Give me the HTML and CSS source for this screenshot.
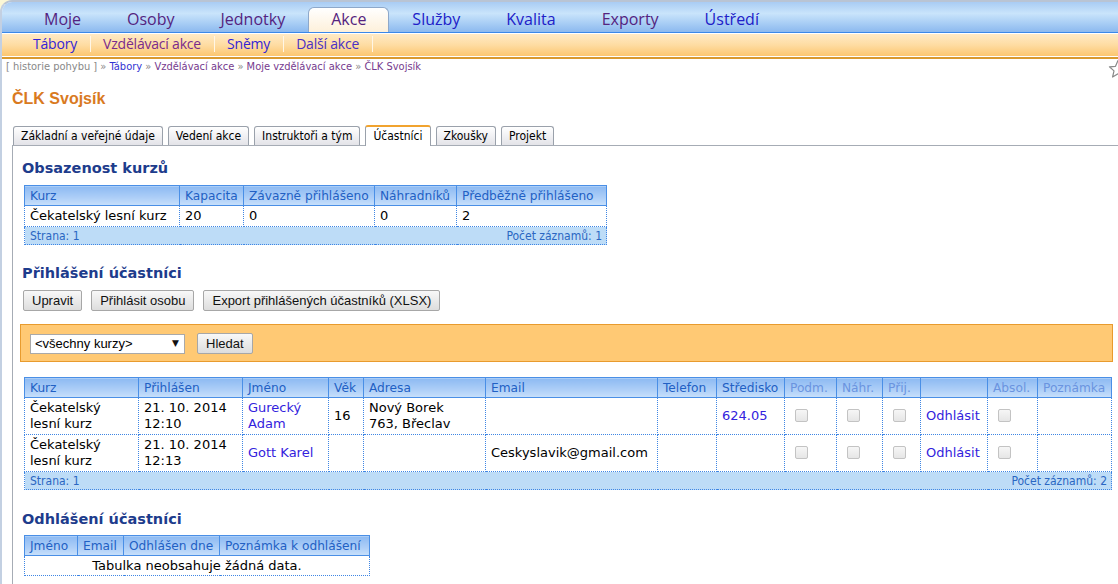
FILE: index.html
```html
<!DOCTYPE html>
<html lang="cs">
<head>
<meta charset="utf-8">
<title>ČLK Svojsík</title>
<link rel="stylesheet" href="styles.css">
</head>
<body>
<div class="page">
  <nav class="topnav">
    <a class="nav-item visited">Moje</a>
    <a class="nav-item visited">Osoby</a>
    <a class="nav-item visited">Jednotky</a>
    <a class="nav-item visited active">Akce</a>
    <a class="nav-item">Služby</a>
    <a class="nav-item">Kvalita</a>
    <a class="nav-item visited">Exporty</a>
    <a class="nav-item">Ústředí</a>
  </nav>
  <nav class="subnav">
    <a class="sub-item">Tábory</a>
    <a class="sub-item visited">Vzdělávací akce</a>
    <a class="sub-item">Sněmy</a>
    <a class="sub-item mixed">Další akce</a>
  </nav>
  <div class="subnav-line"></div>

  <div class="crumbs">
    <span class="hist">[ historie pohybu ]</span> <span class="sep">»</span>
    <a class="crumb">Tábory</a> <span class="sep">»</span>
    <a class="crumb visited">Vzdělávací akce</a> <span class="sep">»</span>
    <a class="crumb visited">Moje vzdělávací akce</a> <span class="sep">»</span>
    <a class="crumb visited">ČLK Svojsík</a>
  </div>

  <h1 class="title">ČLK Svojsík</h1>

  <div class="tabs">
    <span class="tab">Základní a veřejné údaje</span>
    <span class="tab">Vedení akce</span>
    <span class="tab">Instruktoři a tým</span>
    <span class="tab current">Účastníci</span>
    <span class="tab">Zkoušky</span>
    <span class="tab">Projekt</span>
  </div>

  <div class="panel">
    <h2 class="section first">Obsazenost kurzů</h2>
    <table class="grid t1">
      <colgroup><col><col><col><col><col></colgroup>
      <thead>
        <tr><th>Kurz</th><th>Kapacita</th><th>Závazně přihlášeno</th><th>Náhradníků</th><th>Předběžně přihlášeno</th></tr>
      </thead>
      <tbody>
        <tr><td>Čekatelský lesní kurz</td><td>20</td><td>0</td><td>0</td><td>2</td></tr>
      </tbody>
      <tfoot>
        <tr><td colspan="5"><div class="foot"><span>Strana: 1</span><span>Počet záznamů: 1</span></div></td></tr>
      </tfoot>
    </table>

    <h2 class="section">Přihlášení účastníci</h2>
    <div class="buttons">
      <button class="btn">Upravit</button>
      <button class="btn">Přihlásit osobu</button>
      <button class="btn">Export přihlášených účastníků (XLSX)</button>
    </div>

    <div class="filter">
      <span class="select-wrap">
        <select class="sel"><option>&lt;všechny kurzy&gt;</option></select>
        <span class="arrow">▼</span>
      </span>
      <button class="btn search">Hledat</button>
    </div>

    <table class="grid t2">
      <colgroup><col><col><col><col><col><col><col><col><col><col><col><col><col><col></colgroup>
      <thead>
        <tr>
          <th>Kurz</th><th>Přihlášen</th><th>Jméno</th><th>Věk</th><th>Adresa</th><th>Email</th><th>Telefon</th><th>Středisko</th>
          <th class="light">Podm.</th><th class="light">Náhr.</th><th class="light">Přij.</th><th></th><th class="light">Absol.</th><th class="light">Poznámka</th>
        </tr>
      </thead>
      <tbody>
        <tr>
          <td>Čekatelský lesní kurz</td>
          <td>21. 10. 2014 12:10</td>
          <td><a class="link">Gurecký Adam</a></td>
          <td>16</td>
          <td>Nový Borek<br>763, Břeclav</td>
          <td></td>
          <td></td>
          <td><a class="link">624.05</a></td>
          <td><span class="cb"></span></td>
          <td><span class="cb"></span></td>
          <td><span class="cb"></span></td>
          <td><a class="link">Odhlásit</a></td>
          <td><span class="cb"></span></td>
          <td></td>
        </tr>
        <tr>
          <td>Čekatelský lesní kurz</td>
          <td>21. 10. 2014 12:13</td>
          <td><a class="link">Gott Karel</a></td>
          <td></td>
          <td></td>
          <td>Ceskyslavik@gmail.com</td>
          <td></td>
          <td></td>
          <td><span class="cb"></span></td>
          <td><span class="cb"></span></td>
          <td><span class="cb"></span></td>
          <td><a class="link">Odhlásit</a></td>
          <td><span class="cb"></span></td>
          <td></td>
        </tr>
      </tbody>
      <tfoot>
        <tr><td colspan="14"><div class="foot"><span>Strana: 1</span><span>Počet záznamů: 2</span></div></td></tr>
      </tfoot>
    </table>

    <h2 class="section last">Odhlášení účastníci</h2>
    <table class="grid t3">
      <colgroup><col><col><col><col></colgroup>
      <thead>
        <tr><th>Jméno</th><th>Email</th><th>Odhlášen dne</th><th>Poznámka k odhlášení</th></tr>
      </thead>
      <tbody>
        <tr><td colspan="4" class="empty">Tabulka neobsahuje žádná data.</td></tr>
      </tbody>
    </table>
  </div>

  <svg class="star" width="20" height="20" viewBox="0 0 20 20" aria-hidden="true">
    <polygon points="10,1.5 12.5,7.3 18.6,7.8 14,11.9 15.4,18 10,14.8 4.6,18 6,11.9 1.4,7.8 7.5,7.3" fill="#fff" stroke="#8a8a8a" stroke-width="1.2" stroke-linejoin="round"/>
  </svg>
</div>
</body>
</html>
```

FILE: styles.css
```css
html, body {
  margin: 0;
  padding: 0;
}
body {
  background: #fbf7d6;
  font-family: "DejaVu Sans", Verdana, sans-serif;
  font-size: 13px;
  color: #000;
}
a { text-decoration: none; cursor: pointer; }

.page {
  position: relative;
  background: #fff;
  border-top: 2px solid #b9c4d4;
  border-left: 2px solid #c3d0e2;
  border-top-left-radius: 12px;
  min-height: 582px;
  overflow: hidden;
}

/* ---------- top navigation ---------- */
.topnav {
  display: flex;
  align-items: flex-end;
  height: 30px;
  padding-left: 19px;
  background: linear-gradient(#a9ccf4 0%, #c9e4fb 38%, #a9cef5 70%, #8cb9ef 100%);
  border-bottom: 1px solid #3b88e8;
}
.nav-item {
  display: block;
  height: 24px;
  line-height: 23px;
  padding: 0 22px;
  border: 1px solid transparent;
  border-bottom: none;
  font-family: "Open Sans", "DejaVu Sans", sans-serif;
  font-size: 16px;
  color: #2020c8;
}
.nav-item.visited { color: #54237f; }
.nav-item.active {
  background: linear-gradient(#ffffff, #fdf0da);
  border-color: #8ea8ca;
  border-radius: 6px 6px 0 0;
}

.subnav {
  box-sizing: border-box;
  display: flex;
  align-items: center;
  margin-top: 1px;
  height: 22px;
  padding: 0 0 3px 18px;
  background: linear-gradient(#ffeac6 0%, #fedca2 50%, #fcc670 100%);
}
.sub-item {
  position: relative;
  padding: 0 13px;
  font-family: "Open Sans", "DejaVu Sans", sans-serif;
  font-size: 14px;
  line-height: 19px;
  letter-spacing: -0.2px;
  color: #3324d6;
}
.sub-item::after {
  content: "";
  position: absolute;
  right: -1px;
  top: 2px;
  width: 1px;
  height: 16px;
  background: #fff6e6;
}
.sub-item.visited { color: #7a2b8c; }
.sub-item.mixed { color: #4a30c4; }
.subnav-line {
  margin-top: 1px;
  height: 2px;
  background: #d9992f;
}

/* ---------- breadcrumb ---------- */
.crumbs {
  margin-top: 1px;
  padding-left: 4px;
  font-family: "DejaVu Sans Condensed", "DejaVu Sans", sans-serif;
  font-size: 11px;
  line-height: 14px;
  color: #888;
}
.crumbs .sep { color: #888; }
.crumb { color: #3232d2; }
.crumb.visited { color: #763a8e; }

.title {
  margin: 16px 0 0 10px;
  font-family: "Liberation Sans", Arial, sans-serif;
  font-weight: bold;
  font-size: 16px;
  line-height: 18px;
  color: #d97a1f;
}

/* ---------- tabs ---------- */
.tabs {
  display: flex;
  gap: 5px;
  margin: 18px 0 0 11px;
  position: relative;
  z-index: 1;
}
.tab {
  display: block;
  height: 18px;
  line-height: 18px;
  padding: 0 7px;
  border: 1px solid #9aa1ab;
  border-bottom: none;
  border-radius: 3px 3px 0 0;
  background: linear-gradient(#ffffff, #e3e3e8);
  font-family: "DejaVu Sans Condensed", "DejaVu Sans", sans-serif;
  font-size: 12px;
  color: #000;
}
.tab.current {
  height: 19px;
  line-height: 18px;
  margin-bottom: -1px;
  border-top: 2px solid #f1a32f;
  background: #fff;
  margin-top: -1px;
}

/* ---------- panel ---------- */
.panel {
  margin-left: 10px;
  border-top: 1px solid #a6acb5;
  border-left: 1px solid #a6acb5;
  padding: 0 0 20px 9px;
}
.section {
  margin: 19px 0 8px 0;
  font-family: "DejaVu Sans", Verdana, sans-serif;
  font-weight: bold;
  font-size: 14.5px;
  line-height: 18px;
  color: #1d3c8c;
}
.section.first { margin-top: 13px; }
.section.last { margin-top: 20px; margin-bottom: 7px; }

/* ---------- grids ---------- */
.grid {
  border-collapse: collapse;
  table-layout: fixed;
  margin-left: 2px;
}
.grid th {
  padding: 2px 4px 1px 5px;
  border: 1px solid #4a8fe6;
  background: linear-gradient(#8dbaf2 0%, #abcdf7 55%, #c8e0fb 100%);
  font-weight: normal;
  font-size: 12.2px;
  text-align: left;
  line-height: 16px;
  color: #2160c4;
  white-space: nowrap;
  overflow: hidden;
}
.grid th.light { color: #6a94e0; }
.grid td {
  padding: 2px 5px;
  border: 1px dotted #3f86e4;
  line-height: 16px;
  vertical-align: middle;
}
.grid tfoot td {
  background: #bddcf7;
  padding: 2px 4px 1px 5px;
  font-family: "DejaVu Sans Condensed", "DejaVu Sans", sans-serif;
  font-size: 12px;
  line-height: 14px;
  color: #2a66c2;
}
.foot {
  display: flex;
  justify-content: space-between;
}
.link { color: #3322dd; }

.cb {
  display: inline-block;
  width: 11px;
  height: 11px;
  margin-left: 5px;
  border: 1px solid #c3c3c3;
  border-radius: 2px;
  background: linear-gradient(#f6f6f6, #e6e6e6);
  vertical-align: middle;
  position: relative;
  top: -1px;
}

.t1 { width: 582px; }
.t1 col:nth-child(1) { width: 155px; }
.t1 col:nth-child(2) { width: 64px; }
.t1 col:nth-child(3) { width: 131px; }
.t1 col:nth-child(4) { width: 82px; }
.t1 col:nth-child(5) { width: 150px; }

.t2 { width: 1087px; margin-top: 15px; }
.t2 col:nth-child(1) { width: 114px; }
.t2 col:nth-child(2) { width: 104px; }
.t2 col:nth-child(3) { width: 86px; }
.t2 col:nth-child(4) { width: 35px; }
.t2 col:nth-child(5) { width: 122px; }
.t2 col:nth-child(6) { width: 172px; }
.t2 col:nth-child(7) { width: 59px; }
.t2 col:nth-child(8) { width: 68px; }
.t2 col:nth-child(9) { width: 52px; }
.t2 col:nth-child(10) { width: 46px; }
.t2 col:nth-child(11) { width: 38px; }
.t2 col:nth-child(12) { width: 67px; }
.t2 col:nth-child(13) { width: 50px; }
.t2 col:nth-child(14) { width: 74px; }

.t3 { width: 345px; }
.t3 col:nth-child(1) { width: 53px; }
.t3 col:nth-child(2) { width: 46px; }
.t3 col:nth-child(3) { width: 96px; }
.t3 col:nth-child(4) { width: 150px; }
.t3 td.empty { text-align: center; padding: 2px 5px 1px; }

/* ---------- buttons & filter ---------- */
.buttons {
  display: flex;
  gap: 9px;
  margin-left: 1px;
}
.btn {
  height: 21px;
  padding: 0 8px;
  border: 1px solid #a7a7a7;
  border-radius: 2px;
  background: linear-gradient(#f8f8f8, #dddddd);
  font-family: "Liberation Sans", Arial, sans-serif;
  font-size: 13px;
  color: #111;
  line-height: 19px;
}

.filter {
  display: flex;
  align-items: center;
  margin: 13px 0 0 -2px;
  width: 1073px;
  padding: 8px 9px 7px;
  border: 1px solid #e89b2e;
  background: #ffc974;
}
.select-wrap {
  position: relative;
  display: inline-block;
}
.sel {
  -webkit-appearance: none;
  appearance: none;
  width: 155px;
  height: 20px;
  padding: 0 0 0 4px;
  border: 1px solid #a9a9a9;
  border-radius: 0;
  background: #fff;
  font-family: "Liberation Sans", Arial, sans-serif;
  font-size: 13px;
  color: #000;
}
.arrow {
  position: absolute;
  right: 6px;
  top: 4px;
  font-size: 9px;
  line-height: 10px;
  color: #111;
  pointer-events: none;
}
.search { margin-left: 12px; height: 21px; }

.star {
  position: absolute;
  left: 1106px;
  top: 57px;
}
```
